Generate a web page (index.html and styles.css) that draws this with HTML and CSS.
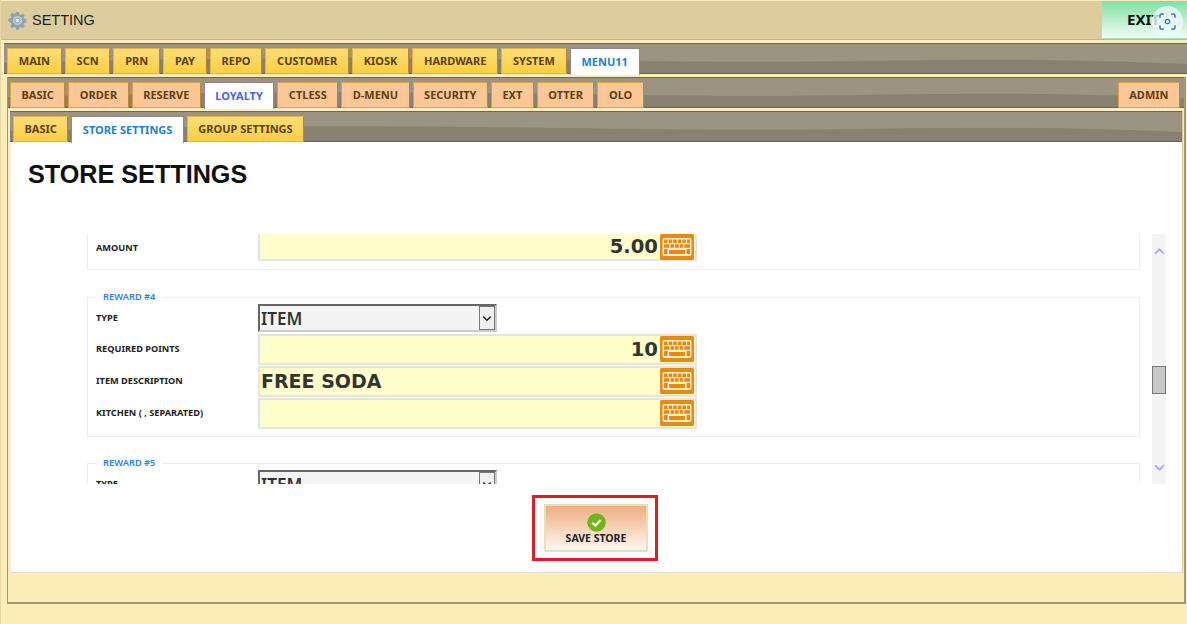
FILE: index.html
```html
<!DOCTYPE html>
<html lang="en">
<head>
<meta charset="utf-8">
<title>Setting</title>
<link rel="stylesheet" href="styles.css">
</head>
<body>
<svg class="defs" width="0" height="0" aria-hidden="true">
  <symbol id="kbd" viewBox="0 0 34 26">
    <rect width="34" height="26" rx="1.5" fill="#e88a12"/>
    <rect x="2.5" y="4" width="29" height="18" rx="2" fill="#fff0da"/>
    <g fill="#e88a12">
      <rect x="4" y="5.5" width="3.6" height="3.6"/><rect x="8.6" y="5.5" width="3.6" height="3.6"/><rect x="13.2" y="5.5" width="3.6" height="3.6"/><rect x="17.8" y="5.5" width="3.6" height="3.6"/><rect x="22.4" y="5.5" width="3.6" height="3.6"/><rect x="27" y="5.5" width="3.2" height="3.6"/>
      <rect x="4" y="10.2" width="5.5" height="3.6"/><rect x="10.5" y="10.2" width="3.6" height="3.6"/><rect x="15.1" y="10.2" width="3.6" height="3.6"/><rect x="19.7" y="10.2" width="3.6" height="3.6"/><rect x="24.3" y="10.2" width="5.9" height="3.6"/>
      <rect x="4" y="15" width="3.6" height="5"/><rect x="9" y="16" width="16" height="4"/><rect x="26.5" y="15" width="3.7" height="5"/>
    </g>
  </symbol>
  <symbol id="wave" viewBox="0 0 1187 30" preserveAspectRatio="none">
    <rect width="1187" height="30" fill="#9c9380"/>
    <path d="M0 19C150 15 300 13 480 15S720 19 860 17 1050 15 1187 20V30H0Z" fill="#888070"/>
    <rect y="29" width="1187" height="1" fill="#6a6353"/>
  </symbol>
</svg>
<div class="app">
  <header class="titlebar">
    <div class="brand">
      <svg class="gear" viewBox="0 0 20 20" aria-hidden="true">
        <path fill="#8ea3b1" d="M8.4 1h3.2l.5 2.5 1.6.7 2.1-1.4 2.3 2.3-1.4 2.1.7 1.6 2.5.5v3.2l-2.5.5-.7 1.6 1.4 2.1-2.3 2.3-2.1-1.4-1.6.7-.5 2.5H8.4l-.5-2.5-1.6-.7-2.1 1.4-2.3-2.3 1.4-2.1-.7-1.6L0 11.600V8.400l2.500-.5.7-1.600-1.400-2.100 2.300-2.300 2.100 1.400 1.600-.7z" transform="translate(.5 .1) scale(.95)"/>
        <circle cx="10" cy="10" r="5" fill="#b9c8d2"/>
        <circle cx="10" cy="10" r="2.600" fill="#dfe6ea" stroke="#7f95a4" stroke-width=".8"/>
      </svg>
      <span>SETTING</span>
    </div>
    <div class="exit">EXIT</div>
  </header>
  <div class="capture" aria-hidden="true">
    <svg viewBox="0 0 18 18" width="17" height="17">
      <path d="M1 5V3a2 2 0 0 1 2-2h2M13 1h2a2 2 0 0 1 2 2v2M17 13v2a2 2 0 0 1-2 2h-2M5 17H3a2 2 0 0 1-2-2v-2" fill="none" stroke="#1f78d1" stroke-width="1.500"/>
      <circle cx="9" cy="9" r="2.300" fill="none" stroke="#1f78d1" stroke-width="1.300"/>
    </svg>
  </div>

  <div class="shell">
    <nav class="band band-1">
      <svg class="wave" aria-hidden="true"><use href="#wave"/></svg>
      <a class="tab y">MAIN</a><a class="tab y">SCN</a><a class="tab y">PRN</a><a class="tab y">PAY</a><a class="tab y">REPO</a><a class="tab y">CUSTOMER</a><a class="tab y">KIOSK</a><a class="tab y">HARDWARE</a><a class="tab y">SYSTEM</a><a class="tab on">MENU11</a>
    </nav>
    <div class="level-2">
      <nav class="band band-2">
        <svg class="wave" aria-hidden="true"><use href="#wave"/></svg>
        <a class="tab p">BASIC</a><a class="tab p">ORDER</a><a class="tab p">RESERVE</a><a class="tab on violet">LOYALTY</a><a class="tab p">CTLESS</a><a class="tab p">D-MENU</a><a class="tab p">SECURITY</a><a class="tab p">EXT</a><a class="tab p">OTTER</a><a class="tab p">OLO</a><a class="tab p admin">ADMIN</a>
      </nav>
      <div class="level-3">
        <nav class="band band-3">
          <svg class="wave" aria-hidden="true"><use href="#wave"/></svg>
          <a class="tab y">BASIC</a><a class="tab on">STORE SETTINGS</a><a class="tab y">GROUP SETTINGS</a>
        </nav>
        <main class="page">
          <h1>STORE SETTINGS</h1>
          <div class="scroller">
            <div class="scroll-view">
              <section class="group group-cut">
                <div class="row first">
                  <label>AMOUNT</label>
                  <div class="field num"><span>5.00</span><svg class="kbd"><use href="#kbd"/></svg></div>
                </div>
              </section>
              <section class="group">
                <h2>REWARD #4</h2>
                <div class="row sel">
                  <label>TYPE</label>
                  <div class="select"><span>ITEM</span><i class="caret"><svg viewBox="0 0 12 8" width="10" height="7"><path d="M1.500 1.500 6 6l4.500-4.500" fill="none" stroke="#222" stroke-width="1.800"/></svg></i></div>
                </div>
                <div class="row">
                  <label>REQUIRED POINTS</label>
                  <div class="field num"><span>10</span><svg class="kbd"><use href="#kbd"/></svg></div>
                </div>
                <div class="row">
                  <label>ITEM DESCRIPTION</label>
                  <div class="field"><span>FREE SODA</span><svg class="kbd"><use href="#kbd"/></svg></div>
                </div>
                <div class="row">
                  <label>KITCHEN ( , SEPARATED)</label>
                  <div class="field"><span></span><svg class="kbd"><use href="#kbd"/></svg></div>
                </div>
              </section>
              <section class="group">
                <h2>REWARD #5</h2>
                <div class="row sel">
                  <label>TYPE</label>
                  <div class="select"><span>ITEM</span><i class="caret"><svg viewBox="0 0 12 8" width="10" height="7"><path d="M1.500 1.500 6 6l4.500-4.500" fill="none" stroke="#222" stroke-width="1.800"/></svg></i></div>
                </div>
              </section>
            </div>
            <div class="scrollbar">
              <svg class="arrow" viewBox="0 0 12 8" width="11" height="7"><path d="M1 6.500 6 1.500l5 5" fill="none" stroke="#a9a9ff" stroke-width="2.200"/></svg>
              <div class="thumb"></div>
              <svg class="arrow down" viewBox="0 0 12 8" width="11" height="7"><path d="M1 1.500 6 6.500l5-5" fill="none" stroke="#a9a9ff" stroke-width="2.200"/></svg>
            </div>
          </div>
          <div class="actions">
            <div class="highlight">
              <button class="save" type="button">
                <svg viewBox="0 0 20 20" width="20" height="20" aria-hidden="true">
                  <circle cx="10" cy="10" r="9.800" fill="#6fb51e"/>
                  <path d="M5.500 10.300 8.800 13.200 14.500 7.300" fill="none" stroke="#fff" stroke-width="2.400"/>
                </svg>
                <span>SAVE STORE</span>
              </button>
            </div>
          </div>
        </main>
      </div>
    </div>
  </div>
</div>
</body>
</html>
```

FILE: styles.css
```css
* { box-sizing: border-box; }
html, body { margin: 0; height: 100%; overflow: hidden; }
body { background: #feecb9; font-family: "Liberation Sans", Arial, sans-serif; color: #222; }
.defs { position: absolute; }
.app { position: relative; height: 624px; padding-top: 1px; border-left: 1px solid #e6d6a6; }

.titlebar {
  height: 39px; display: flex; justify-content: space-between; align-items: stretch;
  background: #ddcd9d; border-bottom: 1px solid #c4b68c;
}
.brand { display: flex; align-items: center; gap: 5px; padding-left: 7px; font-size: 14.500px; color: #1d1d1d; }
.gear { width: 19px; height: 19px; }
.exit {
  width: 86px; padding: 8px 0 0 25px; font: bold 15px "Noto Sans", sans-serif; color: #111;
  background: linear-gradient(#7fe0a3, #f2fcf5); border: 1px solid #9fe9bb; border-width: 0 0 1px 1px;
}
.capture {
  position: absolute; left: 1151px; top: 6px; width: 31px; height: 31px; border-radius: 50%;
  background: rgba(240, 248, 248, .8); display: flex; align-items: center; justify-content: center;
}

.shell { margin: 3px 0 0 3px; }

.band { position: relative; display: flex; align-items: flex-end; gap: 3px; height: 31px; border-top: 1px solid #6f6757; }
.wave { position: absolute; left: 0; top: 0; width: 100%; height: 100%; }
.band-1 { padding-left: 3px; }
.band-2 { padding-left: 2px; }
.band-3 { padding-left: 3px; }

.level-2 {
  height: 527px; margin: 3px 1px 0 3px;
  border: solid #a3977a; border-width: 0 2px 2px 1px;
}
.level-3 { margin: 3px 1px 0 2px; border-right: 1px solid #d9c88f; }

.tab {
  position: relative; height: 26px; display: flex; align-items: center; justify-content: center;
  padding: 0 10.500px 2px; font: bold 11px "Noto Sans", sans-serif; color: #5d3e12; white-space: nowrap;
}
.band-1 .tab { padding: 0 10.800px 2px; }
.tab.y { background: linear-gradient(#fcdd7b, #fdcf3e); border: 1px solid #eab43a; border-right-color: #b58a2e; }
.tab.p { background: #fec795; border: 1px solid #d9a047; border-right-color: #c08a2c; }
.tab.on { background: #fff; color: #1c7fd1; border: 1px solid #8c8c8c; border-bottom: 0; height: 27px; margin-bottom: -1px; }
.tab.violet { color: #4b60f2; }
.tab.admin { margin-left: auto; margin-right: 4px; }

.page { background: #fff; height: 431px; border-bottom: 1px solid #ddd; border-left: 1px solid #eee; display: flex; flex-direction: column; }
h1 { margin: 0; padding: 18px 0 0 17px; height: 92px; font: bold 25.200px/29px "Liberation Sans", Arial, sans-serif; color: #111; }

.scroller { height: 250px; display: flex; padding-left: 76px; }
.scroll-view { width: 1065px; height: 250px; overflow: hidden; }
.group { position: relative; width: 1053px; border: 1px solid #ececec; padding: 5px 8px 0; margin-bottom: 26px; height: 140px; }
.group-cut { border-top: 0; height: 36px; padding-top: 0; margin-bottom: 27px; }
.group h2 {
  position: absolute; left: 8px; top: -8px; margin: 0; padding: 0 7px; background: #fff;
  font: 600 9.300px/13px "Noto Sans", sans-serif; color: #2f7fee;
}
.row { display: flex; align-items: center; height: 32px; }
.row.first { height: 27px; }
.row.sel { height: 30px; }
.row label { width: 162px; font: bold 9.200px/12px "Noto Sans", sans-serif; color: #222; }

.field {
  width: 439px; height: 31px; border: 2px solid #e4e4e4; background: #ffffcc;
  display: flex; align-items: center; justify-content: space-between; padding: 0 1px;
  font: bold 19px "DejaVu Sans", sans-serif; color: #333;
}
.row.first .field { height: 27px; border-top: 0; }
.field.num { justify-content: flex-end; gap: 2px; font-size: 19.600px; }
.kbd { width: 34px; height: 26px; flex: none; }
.select {
  width: 239px; height: 28px; display: flex; justify-content: space-between; align-items: center;
  border: 2px solid; border-color: #666 #ccc #ccc #666; background: #f4f4f4; padding-left: 1px;
  font: 600 17px "Noto Sans", sans-serif; color: #333;
}
.caret { width: 16px; height: 24px; display: flex; align-items: center; justify-content: center; border: 1px solid #777; background: #f0f0f0; }

.scrollbar { position: relative; width: 14px; height: 250px; background: #f4f4f4; display: flex; flex-direction: column; align-items: center; padding-top: 14px; }
.thumb { position: absolute; top: 132px; left: 0; width: 14px; height: 28px; background: #c8c8c8; border: 1px solid #777; }
.arrow.down { position: absolute; bottom: 13px; }

.actions { flex: 1; display: flex; justify-content: center; padding: 11px 3px 0 0; }
.highlight { width: 126px; height: 66px; border: 3px solid #e6192b; display: flex; justify-content: center; padding: 6px 0 0 2px; }
.save {
  width: 104px; height: 48px; padding: 7px 0 0; border: 2px solid #efdcb8;
  background: linear-gradient(#edaf80, #fff6ef);
  display: flex; flex-direction: column; align-items: center; gap: 1px;
  font: bold 10.500px/11px "Noto Sans", sans-serif; color: #222;
}
.save svg { flex: none; width: 19px; height: 19px; }
```
